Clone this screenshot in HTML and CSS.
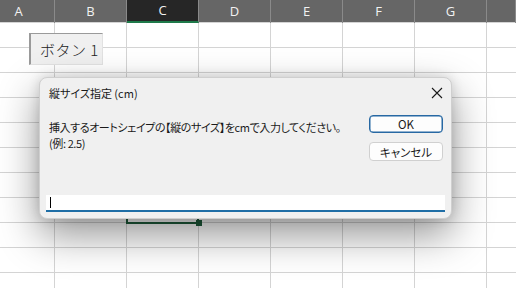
FILE: index.html
```html
<!DOCTYPE html>
<html lang="ja">

<head>
    <meta charset="UTF-8">
    <meta name="viewport" content="width=device-width, initial-scale=1.0">
    <title>縦サイズ指定</title>
    <link rel="stylesheet" href="styles.css">
</head>

<body>
    <section class="sheet">
        <div class="col-heads">
            <div class="col-head">A</div>
            <div class="col-head">B</div>
            <div class="col-head active">C</div>
            <div class="col-head">D</div>
            <div class="col-head">E</div>
            <div class="col-head">F</div>
            <div class="col-head">G</div>
            <div class="col-head"></div>
        </div>
        <div class="cells"></div>

        <button class="sheet-button">ボタン 1</button>
        <div class="selection"><span class="fill-handle"></span></div>
    </section>

    <div class="dialog">
        <div class="dialog-title">
            <span>縦サイズ指定 (cm)</span>
            <svg class="close" width="12" height="12" viewBox="0 0 12 12">
                <path d="M1 1 L11 11 M11 1 L1 11" stroke="#1a1a1a" stroke-width="1.1" fill="none" />
            </svg>
        </div>
        <div class="dialog-body">
            <p class="message">挿入するオートシェイプの【縦のサイズ】をcmで入力してください。<br>(例: 2.5)</p>
            <div class="actions">
                <button class="btn primary">OK</button>
                <button class="btn">キャンセル</button>
            </div>
        </div>
        <div class="input-box"><span class="caret"></span></div>
    </div>
</body>

</html>
```

FILE: styles.css
```css
* {
    margin: 0;
    padding: 0;
    box-sizing: border-box;
}

body {
    background-color: #fff;
    width: 516px;
    height: 288px;
    overflow: hidden;
    position: relative;
    font-family: "Noto Sans CJK JP", "Noto Sans", sans-serif;
}

.sheet {
    margin-left: -17px;
    width: 533px;
    height: 288px;
    position: relative;
}

.col-heads {
    display: grid;
    grid-template-columns: repeat(7, 72px) 1fr;
    height: 22px;
    background-color: #666;
}

.col-head {
    color: #f2f2f2;
    font-family: "Open Sans", "Noto Sans", sans-serif;
    font-size: 13px;
    line-height: 22px;
    text-align: center;
    border-right: 1px solid #8a8a8a;
}

.col-head.active {
    background-color: #262626;
    border-bottom: 2px solid #1f7a4a;
    line-height: 21px;
}

.cells {
    height: 266px;
    background-image:
        linear-gradient(to right, transparent 71px, #d4d4d4 71px),
        linear-gradient(to bottom, transparent 24px, #d4d4d4 24px);
    background-size: 72px 25px;
    background-position: 0 1px;
}

.sheet-button {
    position: absolute;
    left: 46px;
    top: 33px;
    width: 74px;
    height: 32px;
    background-color: #f0f0f0;
    border: 1px solid #e2e2e2;
    border-top-color: #9a9a9a;
    border-left: 2px solid #9a9a9a;
    font-family: "Noto Sans CJK JP", sans-serif;
    font-size: 15px;
    font-weight: 300;
    color: #222;
    text-align: left;
    padding-left: 9px;
    letter-spacing: 0.5px;
}

.selection {
    position: absolute;
    left: 143px;
    top: 197px;
    width: 73px;
    height: 27px;
    border: 2px solid #1e5e3c;
}

.fill-handle {
    position: absolute;
    right: -5px;
    bottom: -4px;
    width: 6px;
    height: 6px;
    background-color: #1e5e3c;
}

.dialog {
    position: absolute;
    left: 39px;
    top: 77px;
    width: 413px;
    height: 142px;
    background-color: #f0f0f0;
    border: 1px solid #cfcfcf;
    border-radius: 8px;
    box-shadow: 0 16px 40px rgba(0, 0, 0, 0.42), 0 0 12px rgba(0, 0, 0, 0.14);
    display: flex;
    flex-direction: column;
}

.dialog-title {
    display: flex;
    align-items: center;
    justify-content: space-between;
    height: 29px;
    padding: 0 8px 0 9px;
    font-size: 11px;
    color: #1a1a1a;
    font-feature-settings: "palt";
}

.dialog-body {
    display: flex;
    justify-content: space-between;
    padding: 8px 8px 0 9px;
    flex: 1;
}

.message {
    padding-top: 4px;
    font-size: 11px;
    line-height: 16px;
    letter-spacing: -0.4px;
    white-space: nowrap;
    color: #1a1a1a;
    font-feature-settings: "palt";
}

.actions {
    display: flex;
    flex-direction: column;
    gap: 9px;
}

.btn {
    width: 74px;
    height: 19px;
    background-color: #fdfdfd;
    border: 1px solid #d0d0d0;
    border-radius: 4px;
    font-family: "Noto Sans CJK JP", sans-serif;
    font-size: 11.5px;
    line-height: 16px;
    color: #1a1a1a;
    font-feature-settings: "palt";
}

.btn.primary {
    height: 18px;
    border-color: #2768a3;
    box-shadow: inset 0 0 0 0.5px #2768a3;
}

.input-box {
    margin: 0 6px 6px 6px;
    height: 17px;
    background-color: #fff;
    border-bottom: 2px solid #1f6ea6;
    padding: 2px 0 0 4px;
}

.caret {
    display: block;
    width: 1px;
    height: 11px;
    background-color: #000;
}
```
